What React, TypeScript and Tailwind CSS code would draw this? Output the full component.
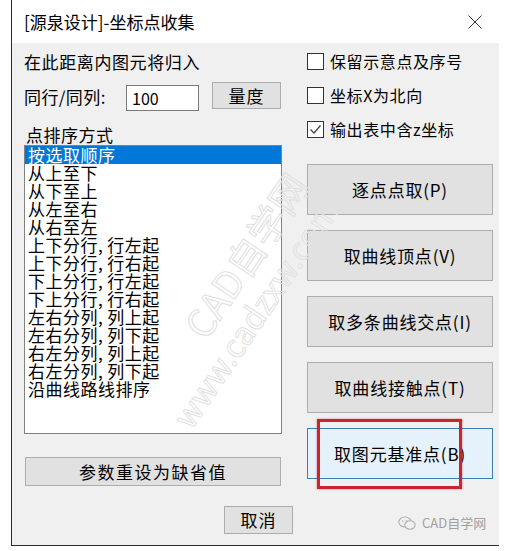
import React from "react";

const sortModes = [
  "按选取顺序",
  "从上至下",
  "从下至上",
  "从左至右",
  "从右至左",
  "上下分行,行左起",
  "上下分行,行右起",
  "下上分行,行左起",
  "下上分行,行右起",
  "左右分列,列上起",
  "左右分列,列下起",
  "右左分列,列上起",
  "右左分列,列下起",
  "沿曲线路线排序",
];

const pickButtons = ["逐点点取(P)", "取曲线顶点(V)", "取多条曲线交点(I)", "取曲线接触点(T)"];

function CheckRow({ label, checked }: { label: string; checked?: boolean }) {
  return (
    <div className="flex items-center h-[20px]">
      <div className="w-[17px] h-[17px] border border-[#333] bg-white flex items-center justify-center">
        {checked && (
          <svg width="13" height="13" viewBox="0 0 13 13">
            <path d="M1.5 6.5 L5 10 L11.5 2.5" fill="none" stroke="#444" strokeWidth="1.3" />
          </svg>
        )}
      </div>
      <span className="ml-[6px] text-[16px] leading-[20px] tracking-[0.6px] text-black">{label}</span>
    </div>
  );
}

// "," in the list is drawn half-width with a gap, like the bitmap font
function ListText({ text }: { text: string }) {
  const parts = text.split(",");
  if (parts.length < 2) return <>{text}</>;
  return (
    <>
      {parts[0]}
      <span className="mr-[4px]">,</span>
      {parts[1]}
    </>
  );
}

export default function App() {
  return (
    <div className="w-[511px] h-[551px] bg-white relative overflow-hidden font-['Noto_Sans_CJK_SC','Liberation_Sans',sans-serif]">
      <div className="ml-[11px] w-[488px] h-[546px] border-l border-b border-[#2b2b2b] flex flex-col">
        {/* TITLE */}
        <div className="h-[43px] bg-white flex items-center justify-between pl-[12px] pr-[17px]">
          <span className="text-[17px] leading-[20px] text-black">[源泉设计]-坐标点收集</span>
          <svg width="14" height="14" viewBox="0 0 14 14">
            <path d="M0.5 0.5 L13.5 13.5 M13.5 0.5 L0.5 13.5" stroke="#333" strokeWidth="1" />
          </svg>
        </div>

        {/* BODY */}
        <div className="flex-1 bg-[#f0f0f0] flex pl-[12px]">
          {/* LEFT */}
          <div className="w-[258px] flex flex-col">
            <div className="mt-[10px] text-[17px] leading-[18px] tracking-[0.6px] text-black">在此距离内图元将归入</div>

            <div className="mt-[11px] flex items-start h-[29px]">
              <span className="mt-[6px] text-[17px] leading-[18px] tracking-[0.4px] text-black w-[102px]">同行/同列:</span>
              <div className="mt-[3px] w-[73px] h-[26px] border border-[#7a7a7a] bg-white pl-[5px] text-[16px] leading-[24px] text-black">
                100
              </div>
              <button className="ml-[13px] w-[69px] h-[27px] bg-[#e1e1e1] border border-[#adadad] text-[17px] leading-[24px] tracking-[1px] text-black">
                量度
              </button>
            </div>

            <div className="mt-[15px] ml-[2px] text-[17px] leading-[18px] tracking-[0.5px] text-black">点排序方式</div>

            <div className="mt-[1px] w-[258px] h-[289px] border border-[#828282] bg-white">
              {sortModes.map((m, i) => (
                <div
                  key={m}
                  className={
                    i === 0
                      ? "h-[18px] pl-[3px] bg-[#0078d7] text-white text-[17px] leading-[18px] tracking-[0.5px]"
                      : "h-[18px] pl-[3px] text-black text-[17px] leading-[18px] tracking-[0.5px]"
                  }
                >
                  <ListText text={m} />
                </div>
              ))}
            </div>

            <button className="mt-[23px] ml-[1px] w-[256px] h-[29px] bg-[#e1e1e1] border border-[#adadad] text-[17px] leading-[26px] tracking-[1.5px] text-black">
              参数重设为缺省值
            </button>

            <button className="mt-[20px] ml-[200px] w-[69px] h-[28px] bg-[#e1e1e1] border border-[#adadad] text-[17px] leading-[26px] tracking-[1px] text-black">
              取消
            </button>
          </div>

          {/* RIGHT */}
          <div className="ml-[25px] w-[186px] flex flex-col">
            <div className="mt-[8px] flex flex-col gap-[14px]">
              <CheckRow label="保留示意点及序号" />
              <CheckRow label="坐标X为北向" />
              <CheckRow label="输出表中含z坐标" checked />
            </div>

            <div className="mt-[25px] flex flex-col gap-[15px]">
              {pickButtons.map((b) => (
                <button
                  key={b}
                  className="w-[186px] h-[51px] bg-[#e1e1e1] border border-[#adadad] text-[17px] leading-[49px] tracking-[0.8px] text-black"
                >
                  {b}
                </button>
              ))}
              <div className="relative">
                <button className="w-[186px] h-[51px] bg-[#e5f1fb] border border-[#3d7fb5] text-[17px] leading-[49px] tracking-[0.8px] text-black">
                  取图元基准点(B)
                </button>
                <div className="absolute left-[10px] top-[-9px] w-[145px] h-[70px] border-[3px] border-[#c9252c] shadow-[0_0_2px_rgba(201,37,44,0.6)]" />
              </div>
            </div>
          </div>
        </div>
      </div>

      {/* WATERMARK */}
      <div className="absolute left-[151px] top-[234px] w-[190px] rotate-[-56deg] text-[38px] leading-[40px] text-transparent [-webkit-text-stroke:1px_#e0e0e0] whitespace-nowrap pointer-events-none">
        CAD自学网
      </div>
      <div className="absolute left-[118px] top-[290px] w-[280px] rotate-[-56deg] text-[32px] leading-[34px] text-transparent [-webkit-text-stroke:1px_#e2e2e2] whitespace-nowrap pointer-events-none">
        www.cadzxw.com
      </div>

      {/* LOGO */}
      <div className="absolute left-[398px] top-[515px] flex items-center gap-[6px] text-[#a0a0a0]">
        <svg width="18" height="15" viewBox="0 0 18 15">
          <ellipse cx="7" cy="6" rx="6.2" ry="5" fill="none" stroke="#b0b0b0" strokeWidth="1.1" />
          <ellipse cx="12" cy="9" rx="5.2" ry="4.2" fill="#f0f0f0" stroke="#b0b0b0" strokeWidth="1.1" />
          <circle cx="4.8" cy="5" r="0.8" fill="#b0b0b0" />
          <circle cx="8.6" cy="5" r="0.8" fill="#b0b0b0" />
        </svg>
        <span className="text-[13px] leading-[16px]">CAD自学网</span>
      </div>
    </div>
  );
}
